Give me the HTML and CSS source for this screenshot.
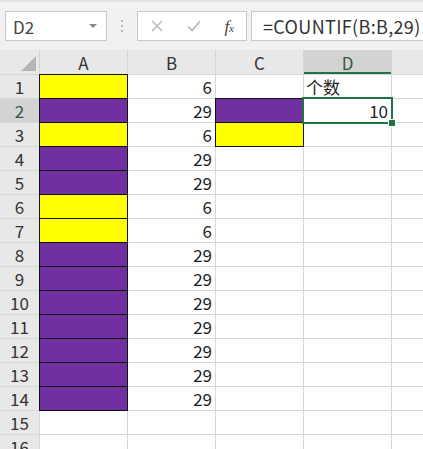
FILE: index.html
```html
<!DOCTYPE html>
<html>
<head>
<meta charset="utf-8">
<link rel="stylesheet" href="styles.css">
</head>
<body>
<div class="toolbar">
  <div class="namebox"><span class="name">D2</span><span class="caret"></span></div>
  <div class="dots"><i></i><i></i><i></i></div>
  <div class="fbtns">
    <svg class="ico" width="14" height="14" viewBox="0 0 14 14"><path d="M2 2L12 12M12 2L2 12" stroke="#b5b5b5" stroke-width="1.4" fill="none"/></svg>
    <svg class="ico" width="16" height="14" viewBox="0 0 16 14"><path d="M2 7.5L6 11.5L14 2.5" stroke="#b5b5b5" stroke-width="1.6" fill="none"/></svg>
    <span class="fx"><i>f</i><sub>x</sub></span>
  </div>
  <div class="finput">=COUNTIF(B:B,29)</div>
</div>
<div class="grid">
  <div class="hd corner"><span class="tri"></span></div>
  <div class="hd">A</div><div class="hd">B</div><div class="hd">C</div><div class="hd sel">D</div><div class="hd"></div>

  <div class="rh">1</div><div class="c y"></div><div class="c n">6</div><div class="c"></div><div class="c t">个数</div><div class="c"></div>
  <div class="rh rsel">2</div><div class="c p"></div><div class="c n">29</div><div class="c p"></div><div class="c n active">10<span class="handle"></span></div><div class="c"></div>
  <div class="rh">3</div><div class="c y"></div><div class="c n">6</div><div class="c y"></div><div class="c"></div><div class="c"></div>
  <div class="rh">4</div><div class="c p"></div><div class="c n">29</div><div class="c"></div><div class="c"></div><div class="c"></div>
  <div class="rh">5</div><div class="c p"></div><div class="c n">29</div><div class="c"></div><div class="c"></div><div class="c"></div>
  <div class="rh">6</div><div class="c y"></div><div class="c n">6</div><div class="c"></div><div class="c"></div><div class="c"></div>
  <div class="rh">7</div><div class="c y"></div><div class="c n">6</div><div class="c"></div><div class="c"></div><div class="c"></div>
  <div class="rh">8</div><div class="c p"></div><div class="c n">29</div><div class="c"></div><div class="c"></div><div class="c"></div>
  <div class="rh">9</div><div class="c p"></div><div class="c n">29</div><div class="c"></div><div class="c"></div><div class="c"></div>
  <div class="rh">10</div><div class="c p"></div><div class="c n">29</div><div class="c"></div><div class="c"></div><div class="c"></div>
  <div class="rh">11</div><div class="c p"></div><div class="c n">29</div><div class="c"></div><div class="c"></div><div class="c"></div>
  <div class="rh">12</div><div class="c p"></div><div class="c n">29</div><div class="c"></div><div class="c"></div><div class="c"></div>
  <div class="rh">13</div><div class="c p"></div><div class="c n">29</div><div class="c"></div><div class="c"></div><div class="c"></div>
  <div class="rh">14</div><div class="c p"></div><div class="c n">29</div><div class="c"></div><div class="c"></div><div class="c"></div>
  <div class="rh">15</div><div class="c"></div><div class="c"></div><div class="c"></div><div class="c"></div><div class="c"></div>
  <div class="rh">16</div><div class="c"></div><div class="c"></div><div class="c"></div><div class="c"></div><div class="c"></div>
</div>
</body>
</html>
```

FILE: styles.css
```css
html, body {
  margin: 0;
  padding: 0;
  background: #ffffff;
  overflow: hidden;
}
body {
  width: 423px;
  height: 449px;
  font-family: "Noto Sans CJK SC", "Liberation Sans", sans-serif;
  color: #222;
}
.toolbar {
  height: 50px;
  box-sizing: border-box;
  background: #f1f1f1;
  border-top: 2px solid #e4e4e4;
  display: flex;
  align-items: flex-start;
  padding-top: 9px;
}
.namebox {
  margin-left: 5px;
  width: 102px;
  height: 30px;
  box-sizing: border-box;
  border: 1px solid #c8c8c8;
  background: #fff;
  display: flex;
  align-items: center;
  justify-content: space-between;
  padding: 0 9px 0 7px;
}
.name {
  font-size: 17px;
  color: #444;
  line-height: 1;
}
.caret {
  width: 0;
  height: 0;
  border-left: 4px solid transparent;
  border-right: 4px solid transparent;
  border-top: 4px solid #888;
}
.dots {
  width: 30px;
  display: flex;
  flex-direction: column;
  align-items: center;
  gap: 3px;
  padding-top: 9px;
}
.dots i {
  display: block;
  width: 2px;
  height: 2px;
  background: #b8b8b8;
}
.fbtns {
  width: 110px;
  height: 30px;
  box-sizing: border-box;
  border: 1px solid #c8c8c8;
  background: #fff;
  display: flex;
  align-items: center;
  justify-content: space-between;
  padding: 0 12px 0 12px;
}
.fx {
  font-family: "Liberation Serif", serif;
  font-size: 17px;
  color: #444;
  line-height: 1;
}
.fx sub {
  font-size: 11px;
  font-style: italic;
  vertical-align: baseline;
}
.finput {
  margin-left: 4px;
  flex: 1;
  height: 30px;
  box-sizing: border-box;
  border: 1px solid #c8c8c8;
  border-right: none;
  background: #fff;
  font-size: 18px;
  letter-spacing: 0.35px;
  line-height: 28px;
  padding-left: 11px;
  color: #333;
  white-space: nowrap;
}
.grid {
  display: grid;
  grid-template-columns: 39px 87px 87px 87px 87px 40px;
  grid-template-rows: 24px repeat(16, 23px);
  gap: 1px;
  background: #d6d6d6;
  padding-bottom: 1px;
}
.hd {
  background: #e8e8e8;
  font-size: 17px;
  color: #333;
  text-align: center;
  line-height: 25px;
}
.hd.sel {
  background: #d3d3d3;
  box-shadow: inset 0 -2px 0 #217346;
  color: #2c5a3e;
}
.corner {
  position: relative;
}
.tri {
  position: absolute;
  right: 3px;
  bottom: 3px;
  width: 0;
  height: 0;
  border-left: 15px solid transparent;
  border-bottom: 15px solid #b5b5b5;
}
.rh {
  background: #e8e8e8;
  font-size: 17px;
  color: #333;
  text-align: center;
  line-height: 23px;
}
.rh.rsel {
  background: #d3d3d3;
  color: #2c5a3e;
}
.c {
  background: #fff;
  font-size: 17px;
  line-height: 24px;
  color: #222;
}
.n {
  text-align: right;
  padding-right: 3px;
}
.t {
  padding-left: 2px;
}
.y {
  background: #ffff00;
  outline: 1px solid #111;
}
.p {
  background: #7030a0;
  outline: 1px solid #111;
}
.active {
  position: relative;
  outline: 2px solid #217346;
  outline-offset: 0;
  z-index: 2;
}
.handle {
  position: absolute;
  right: -5px;
  bottom: -5px;
  width: 6px;
  height: 6px;
  background: #217346;
  border: 1px solid #fff;
}
```
